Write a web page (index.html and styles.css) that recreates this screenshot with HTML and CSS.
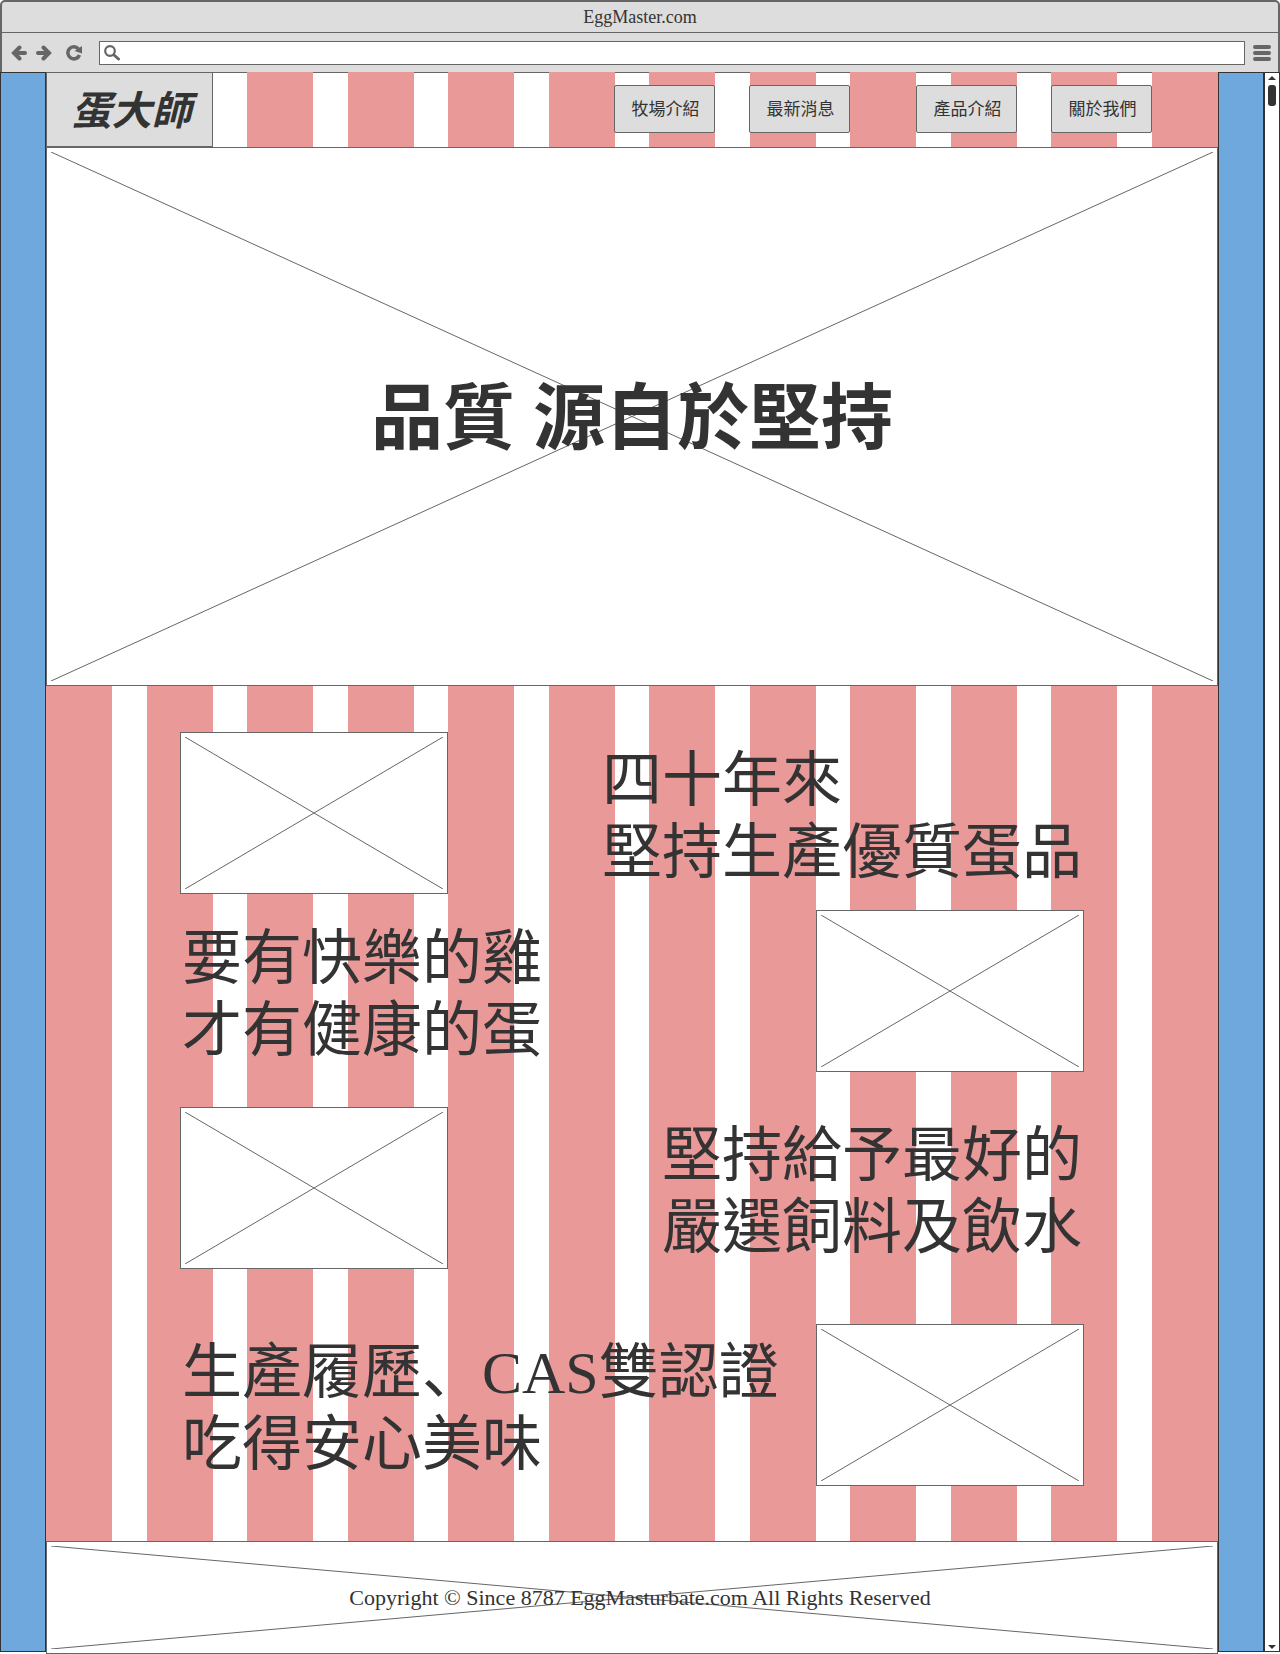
FILE: index.html
```html
<!DOCTYPE html>
<html lang="zh-Hant">
<head>
<meta charset="utf-8">
<title>EggMaster.com</title>
<meta name="viewport" content="width=device-width, initial-scale=1">
<link rel="stylesheet" href="styles.css">
</head>
<body>
<div class="browser">
  <div class="titlebar">EggMaster.com</div>
  <div class="toolbar">
    <button class="tool" type="button" aria-label="Back">
      <svg class="icon" viewBox="0 0 16 16"><path d="M8.500 2.500 3 8l5.500 5.500M4 8h10" stroke-width="4" stroke-linecap="round" stroke-linejoin="miter"/></svg>
    </button>
    <button class="tool" type="button" aria-label="Forward">
      <svg class="icon" viewBox="0 0 16 16"><path d="M7.500 2.500 13 8l-5.500 5.500M12 8H2" stroke-width="4" stroke-linecap="round" stroke-linejoin="miter"/></svg>
    </button>
    <button class="tool tool-reload" type="button" aria-label="Reload">
      <svg class="icon" viewBox="0 0 16 16"><path d="M12.500 4A6 6 0 1 0 13.500 10" stroke-width="3.500"/><path class="solid" d="M16 1v7.500L8.500 6z"/></svg>
    </button>
    <label class="address">
      <svg class="icon" viewBox="0 0 16 16"><circle cx="6" cy="6" r="4.800" stroke-width="2.200"/><path d="M10 10l4.500 4" stroke-width="3" stroke-linecap="round"/></svg>
      <input class="address-input" type="text" aria-label="Address">
    </label>
    <button class="tool tool-menu" type="button" aria-label="Menu">
      <svg class="icon icon-menu" viewBox="0 0 18 16"><path d="M2 2h14M2 8h14M2 14h14" stroke-width="4" stroke-linecap="round"/></svg>
    </button>
  </div>

  <div class="viewport">
    <div class="side side-left"></div>
    <div class="site">
      <div class="stripes" aria-hidden="true">
        <i></i><i></i><i></i><i></i><i></i><i></i><i></i><i></i><i></i><i></i><i></i><i></i>
      </div>
      <div class="page">
        <header class="header">
          <h1 class="logo">蛋大師</h1>
          <nav class="nav">
            <div class="nav-group">
              <a class="nav-link" href="#farm">牧場介紹</a>
              <a class="nav-link" href="#news">最新消息</a>
            </div>
            <div class="nav-group">
              <a class="nav-link" href="#products">產品介紹</a>
              <a class="nav-link" href="#about">關於我們</a>
            </div>
          </nav>
        </header>

        <section class="hero placeholder">
          <svg class="cross"><line x1="0" y1="0" x2="100%" y2="100%"/><line x1="100%" y1="0" x2="0" y2="100%"/></svg>
          <h2 class="hero-title">品質 源自於堅持</h2>
        </section>

        <main class="features">
          <section class="feature">
            <div class="photo placeholder"><svg class="cross"><line x1="0" y1="0" x2="100%" y2="100%"/><line x1="100%" y1="0" x2="0" y2="100%"/></svg></div>
            <p class="feature-text">四十年來<br>堅持生產優質蛋品</p>
          </section>
          <section class="feature">
            <p class="feature-text">要有快樂的雞<br>才有健康的蛋</p>
            <div class="photo placeholder"><svg class="cross"><line x1="0" y1="0" x2="100%" y2="100%"/><line x1="100%" y1="0" x2="0" y2="100%"/></svg></div>
          </section>
          <section class="feature">
            <div class="photo placeholder"><svg class="cross"><line x1="0" y1="0" x2="100%" y2="100%"/><line x1="100%" y1="0" x2="0" y2="100%"/></svg></div>
            <p class="feature-text">堅持給予最好的<br>嚴選飼料及飲水</p>
          </section>
          <section class="feature">
            <p class="feature-text">生產履歷<span class="comma" lang="ja">、</span>CAS雙認證<br>吃得安心美味</p>
            <div class="photo placeholder"><svg class="cross"><line x1="0" y1="0" x2="100%" y2="100%"/><line x1="100%" y1="0" x2="0" y2="100%"/></svg></div>
          </section>
        </main>

        <footer class="footer placeholder">
          <svg class="cross"><line x1="0" y1="0" x2="100%" y2="100%"/><line x1="100%" y1="0" x2="0" y2="100%"/></svg>
          <p class="copyright">Copyright © Since 8787 EggMasturbate.com All Rights Reserved</p>
        </footer>
      </div>
    </div>
    <div class="side side-right"></div>
    <div class="scrollbar" aria-hidden="true">
      <svg class="scroll-arrow" viewBox="0 0 8 4"><path d="M4 0l4 4H0z"/></svg>
      <div class="thumb"></div>
      <svg class="scroll-arrow scroll-down" viewBox="0 0 8 4"><path d="M0 0h8L4 4z"/></svg>
    </div>
  </div>
</div>
</body>
</html>
```
FILE: styles.css
```css
* {
  box-sizing: border-box;
}

body {
  margin: 0;
  background: #fff;
  color: #333;
  font-family: "Liberation Serif", "Noto Sans CJK TC", serif;
}

h1, h2, p {
  margin: 0;
}

/* Browser chrome */
.titlebar {
  height: 33px;
  border: 2px solid #666;
  border-bottom-width: 1px;
  border-radius: 5px 5px 0 0;
  background: #ddd;
  font-size: 18px;
  line-height: 30px;
  text-align: center;
}

.toolbar {
  display: flex;
  align-items: center;
  height: 39px;
  padding: 0 7px 0 9px;
  border: solid #666;
  border-width: 0 2px;
  background: #ddd;
}

.tool {
  display: flex;
  margin: 0 9px 0 0;
  padding: 0;
  border: 0;
  background: none;
}

.tool-reload {
  margin: 0 17px 0 5px;
}

.tool-menu {
  margin: 0 0 0 8px;
}

.icon {
  flex: none;
  width: 16px;
  height: 16px;
  fill: none;
  stroke: #666;
}

.icon-menu {
  width: 18px;
}

.solid {
  fill: #666;
  stroke: none;
}

.address {
  display: flex;
  flex: 1;
  align-items: center;
  gap: 4px;
  height: 24px;
  padding: 0 4px;
  border: 1px solid #666;
  background: #fff;
}

.address-input {
  flex: 1;
  min-width: 0;
  height: 20px;
  padding: 0;
  border: 0;
  outline: 0;
  background: none;
  font: inherit;
}

/* Window content: blue margins, striped page, scrollbar */
.viewport {
  display: grid;
  grid-template-columns: 46px 1fr 47px 15px;
}

.side {
  margin-bottom: 2px;
  border: 1px solid #333;
  background: #6fa8dc;
}

.side-right {
  border-right-width: 2px;
}

.site {
  display: grid;
}

.stripes,
.page {
  grid-area: 1 / 1;
}

.stripes {
  display: flex;
  justify-content: space-between;
  background: linear-gradient(#666 1px, #fff 1px);
}

.stripes i {
  width: 66px;
  background: #ea9999;
}

.scrollbar {
  display: flex;
  flex-direction: column;
  align-items: center;
  margin-bottom: 2px;
  padding: 3px 0 2px;
  border: solid #333;
  border-width: 1px 1px 1px 0;
  background: #fff;
}

.scroll-arrow {
  width: 8px;
  height: 4px;
  fill: #333;
}

.scroll-down {
  margin-top: auto;
}

.thumb {
  width: 8px;
  height: 21px;
  margin-top: 5px;
  border-radius: 3px;
  background: #333;
}

/* Header */
.header {
  display: flex;
  align-items: flex-start;
  justify-content: space-between;
  padding-right: 66px;
}

.logo {
  width: 167px;
  padding: 12px 0 7px 4px;
  border: 1px solid #666;
  background: #ddd;
  font-size: 40px;
  font-style: italic;
  font-weight: 700;
  line-height: 54px;
  text-align: center;
}

.nav {
  display: flex;
  gap: 66px;
  padding-top: 13px;
}

.nav-group {
  display: flex;
  gap: 34px;
}

.nav-link {
  width: 101px;
  padding: 12px 0 10px 2px;
  border: 1px solid #666;
  border-radius: 2px;
  background: #ddd;
  color: #333;
  font-size: 17px;
  line-height: 24px;
  text-align: center;
  text-decoration: none;
}

/* Crossed image placeholders */
.placeholder {
  display: grid;
  padding: 4px;
  border: 1px solid #666;
  background: #fff;
}

.placeholder > * {
  grid-area: 1 / 1;
}

.cross {
  contain: size;
  width: 100%;
  height: 100%;
  stroke: #666;
}

.hero {
  min-height: 539px;
}

.hero-title {
  align-self: center;
  padding-top: 4px;
  font-size: 72px;
  font-weight: 700;
  line-height: 96px;
  text-align: center;
}

/* Feature rows */
.features {
  padding: 46px 134px 55px;
}

.feature {
  display: flex;
  align-items: center;
  justify-content: space-between;
}

.feature:nth-child(2) {
  margin-top: 16px;
}

.feature:nth-child(3) {
  margin-top: 35px;
}

.feature:nth-child(4) {
  margin-top: 55px;
}

.photo {
  width: 268px;
  height: 162px;
}

.feature-text {
  padding: 7px 2px 0;
  font-size: 60px;
  line-height: 72px;
  white-space: nowrap;
}

/* The JP face sets this comma in the lower left corner */
.comma {
  font-family: "Noto Sans CJK JP", sans-serif;
  line-height: 1;
}

/* Footer */
.footer {
  min-height: 113px;
}

.copyright {
  align-self: center;
  padding-left: 16px;
  font-size: 22px;
  line-height: 28px;
  text-align: center;
}
```
